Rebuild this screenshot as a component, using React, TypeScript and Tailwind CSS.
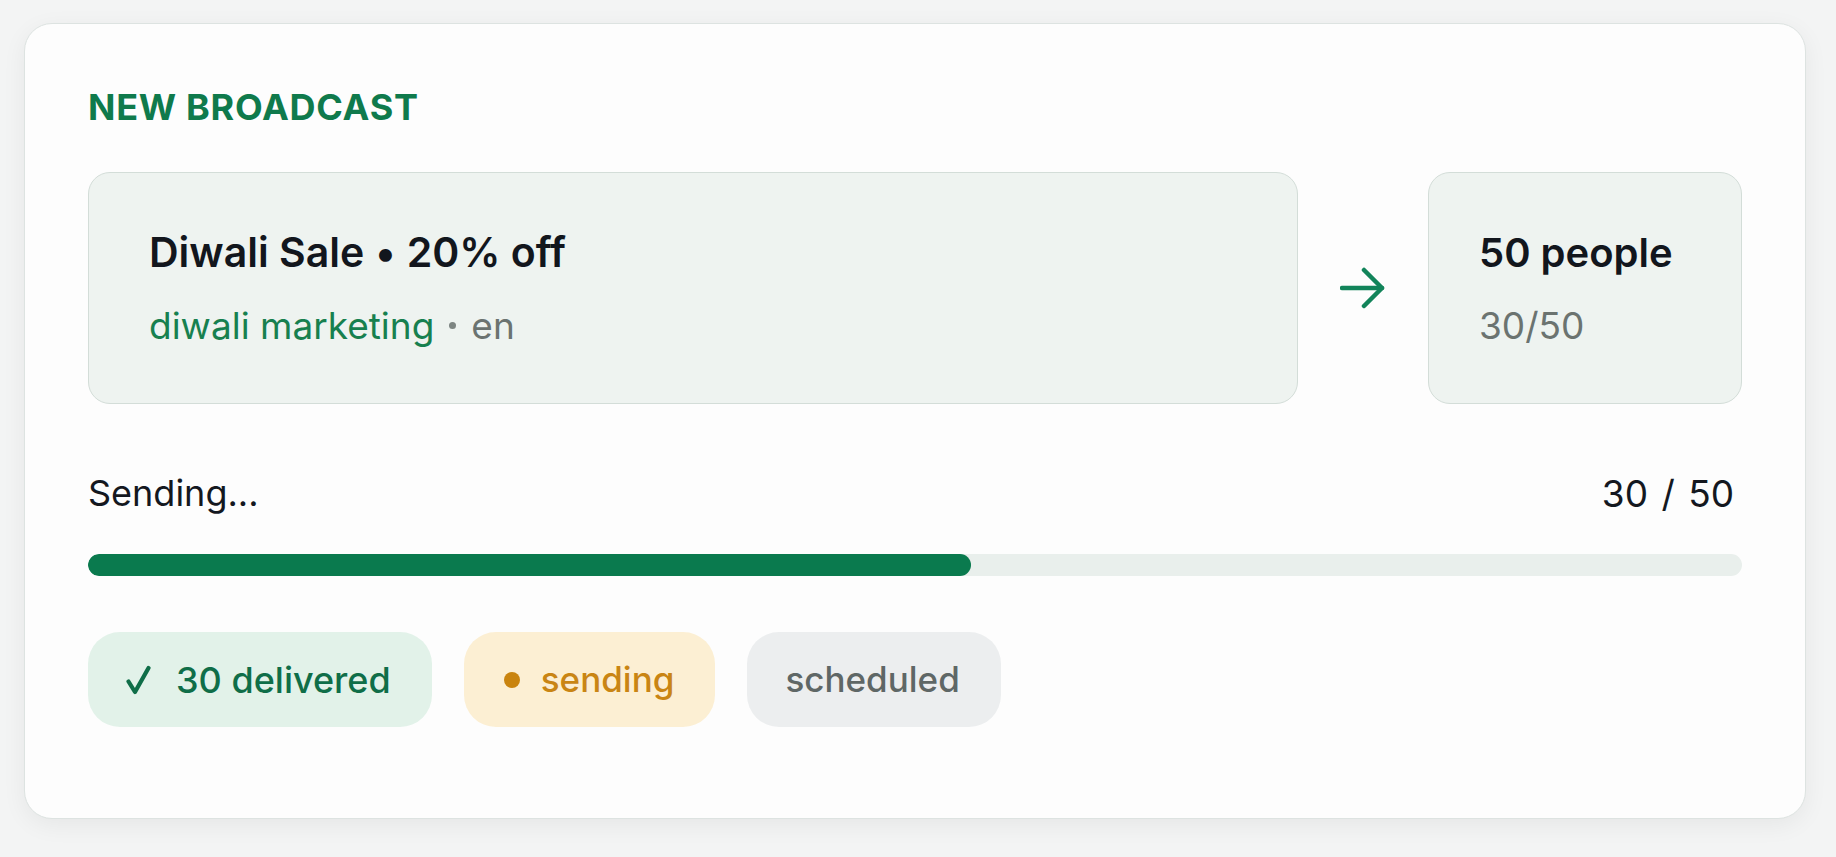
import React from "react"

const font = { fontFamily: "Inter, 'Noto Sans', sans-serif" }

function Arrow() {
  return (
    <svg width="46" height="42" viewBox="0 0 46 42" fill="none">
      <path d="M2 21H42" stroke="#12845a" strokeWidth="4.5" strokeLinecap="round" />
      <path d="M24 3L42 21L24 39" stroke="#12845a" strokeWidth="4.5" strokeLinecap="round" strokeLinejoin="round" />
    </svg>
  )
}

function Check() {
  return (
    <svg width="25" height="30" viewBox="0 0 25 30" fill="none">
      <path d="M2.5 16.5L9 27L22.5 3" stroke="#0f6e48" strokeWidth="4.2" strokeLinecap="round" strokeLinejoin="round" />
    </svg>
  )
}

export default function App() {
  const sent = 30
  const total = 50

  return (
    <div className="min-h-screen w-full bg-[#f3f4f4] pt-[23px] pl-[24px]" style={font}>
      <div className="w-[1782px] rounded-[28px] border border-[#dde3e1] bg-[#fdfdfd] px-[63px] pt-[63px] pb-[91px] shadow-[0_6px_24px_rgba(0,0,0,0.06)]">
        {/* Header */}
        <div className="flex h-[40px] items-center">
          <h2 className="text-[36px] leading-none font-bold tracking-[0.02em] text-[#0f7a4c]">NEW BROADCAST</h2>
        </div>

        {/* Message -> audience */}
        <div className="mt-[45px] flex h-[232px] items-stretch">
          <div className="flex flex-1 flex-col justify-center rounded-[22px] border border-[#d3ddd8] bg-[#eef3f0] pl-[60px]">
            <div className="text-[41px] leading-none font-semibold text-[#12161d]">
              Diwali Sale <span className="font-medium">•</span> 20% off
            </div>
            <div className="mt-[34px] flex items-center text-[37px] leading-none">
              <span className="text-[#17804f]">diwali marketing</span>
              <span className="mx-[15px] h-[7px] w-[7px] rounded-full bg-[#7d8582]" />
              <span className="text-[#6b7370]">en</span>
            </div>
          </div>

          <div className="flex w-[130px] items-center justify-center">
            <Arrow />
          </div>

          <div className="flex w-[314px] flex-col justify-center rounded-[22px] border border-[#d3ddd8] bg-[#eef3f0] pl-[50px]">
            <div className="text-[40px] leading-none font-semibold text-[#12161d]">50 people</div>
            <div className="mt-[34px] text-[37px] leading-none text-[#6b7370]">
              {sent}/{total}
            </div>
          </div>
        </div>

        {/* Progress */}
        <div className="mt-[69px] flex h-[40px] items-center justify-between">
          <span className="text-[36px] leading-none text-[#14181f]">Sending...</span>
          <span className="pr-[8px] text-[37px] leading-none text-[#14181f] [word-spacing:3px]">
            {sent} / {total}
          </span>
        </div>
        <div className="mt-[41px] h-[22px] w-full overflow-hidden rounded-full bg-[#e9efec]">
          <div className="h-full w-[53.4%] rounded-full bg-[#0a7a4e]" />
        </div>

        {/* Status chips */}
        <div className="mt-[56px] flex h-[95px] gap-[32px]">
          <div className="flex h-full items-center gap-[25px] rounded-[32px] bg-[#e2f2e9] pr-[41px] pl-[38px]">
            <Check />
            <span className="text-[36px] leading-none font-medium text-[#0f6e48]">30 delivered</span>
          </div>
          <div className="flex h-full items-center gap-[21px] rounded-[32px] bg-[#fcefd3] pr-[41px] pl-[40px]">
            <span className="h-[16px] w-[16px] rounded-full bg-[#c9840f]" />
            <span className="text-[35px] leading-none font-medium text-[#c98514]">sending</span>
          </div>
          <div className="flex h-full items-center rounded-[32px] bg-[#eceeef] pr-[41px] pl-[38px]">
            <span className="text-[35px] leading-none font-medium text-[#5f6766]">scheduled</span>
          </div>
        </div>
      </div>
    </div>
  )
}
